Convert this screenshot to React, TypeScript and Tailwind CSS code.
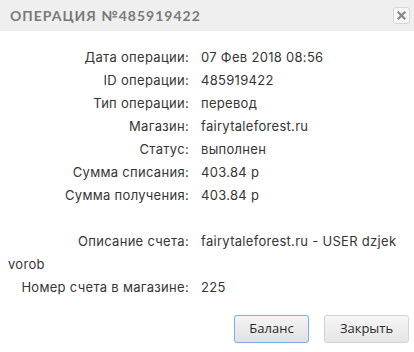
const rows: [string, string][] = [
  ["Дата операции:", "07 Фев 2018 08:56"],
  ["ID операции:", "485919422"],
  ["Тип операции:", "перевод"],
  ["Магазин:", "fairytaleforest.ru"],
  ["Статус:", "выполнен"],
  ["Сумма списания:", "403.84 р"],
  ["Сумма получения:", "403.84 р"],
];

function Row({ label, value }: { label: string; value: string }) {
  return (
    <div>
      <span className="inline-block w-[181px] text-right mr-[12px]">{label}</span>
      {value}
    </div>
  );
}

export default function App() {
  return (
    <div className="w-[414px] h-[352px] bg-white overflow-hidden flex flex-col">
      <div className="h-[31px] bg-[#efefef] flex items-center justify-between pl-[10px] pr-[4px]">
        <span className="text-[14px] font-bold tracking-[1px] text-[#7a7a7a] font-['Lato',sans-serif]">
          ОПЕРАЦИЯ №485919422
        </span>
        <button className="w-[17px] h-[17px] rounded-[3px] border border-[#d6d6d6] bg-[#f7f7f7] flex items-center justify-center">
          <svg width="9" height="9" viewBox="0 0 9 9">
            <path d="M1.5 1.5 L7.5 7.5 M7.5 1.5 L1.5 7.5" stroke="#8a8a8a" strokeWidth="2.2" strokeLinecap="square" />
          </svg>
        </button>
      </div>

      <div className="pl-[8px] pr-[10px] pt-[15px] text-[13px] leading-[23px] tracking-[0.3px] text-[#353535] font-['Inter',sans-serif]">
        {rows.map(([l, v]) => (
          <Row key={l} label={l} value={v} />
        ))}
        <div className="h-[23px]" />
        <Row label="Описание счета:" value="fairytaleforest.ru - USER dzjek vorob" />
        <Row label="Номер счета в магазине:" value="225" />
      </div>

      <div className="flex justify-end gap-[15px] pr-[5px] mt-[16px] font-['Open_Sans',sans-serif] text-[13px] text-[#2b2b2b]">
        <button className="w-[75px] h-[28px] rounded-[3px] border border-[#7eaee0] bg-gradient-to-b from-[#f4f4f4] to-[#e1e1e1] shadow-[0_0_1px_#a9c9ee]">
          Баланс
        </button>
        <button className="w-[85px] h-[28px] rounded-[3px] border border-[#d3d3d3] bg-gradient-to-b from-[#f6f6f6] to-[#e6e6e6]">
          Закрыть
        </button>
      </div>
    </div>
  );
}
